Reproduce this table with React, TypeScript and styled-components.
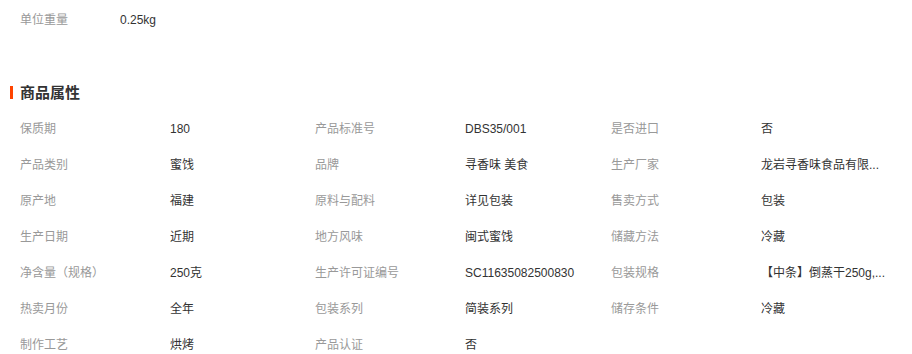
import React from "react";
import styled, { createGlobalStyle } from "styled-components";

const Global = createGlobalStyle`
  html, body { margin: 0; padding: 0; background: #fff; }
  body { font-family: "Liberation Sans", "Noto Sans CJK SC", sans-serif; font-size: 12px; color: #333; }
`;

const Page = styled.div`
  width: 912px;
  padding-left: 20px;
  box-sizing: border-box;
`;

const TopRow = styled.div`
  display: flex;
  height: 40px;
  line-height: 41px;
`;

const TopLabel = styled.span`
  width: 100px;
  color: #999;
`;

const TopValue = styled.span`
  color: #333;
`;

const Title = styled.h3`
  position: relative;
  margin: 43px 0 0 0;
  height: 20px;
  line-height: 20px;
  font-size: 15px;
  font-weight: bold;
  color: #333;
  &::before {
    content: "";
    position: absolute;
    left: -10px;
    top: 3px;
    width: 3px;
    height: 13px;
    background: #ff4400;
  }
`;

const Grid = styled.div`
  margin-top: 8px;
  display: grid;
  grid-template-columns: 150px 145px 150px 146px 150px 130px;
  grid-auto-rows: 36px;
  align-items: center;
`;

const Cell = styled.div<{ $label?: boolean }>`
  color: ${(p) => (p.$label ? "#999" : "#333")};
  line-height: 36px;
  white-space: nowrap;
`;

const rows: [string, string][][] = [
  [["保质期", "180"], ["产品标准号", "DBS35/001"], ["是否进口", "否"]],
  [["产品类别", "蜜饯"], ["品牌", "寻香味 美食"], ["生产厂家", "龙岩寻香味食品有限..."]],
  [["原产地", "福建"], ["原料与配料", "详见包装"], ["售卖方式", "包装"]],
  [["生产日期", "近期"], ["地方风味", "闽式蜜饯"], ["储藏方法", "冷藏"]],
  [["净含量（规格）", "250克"], ["生产许可证编号", "SC11635082500830"], ["包装规格", "【中条】倒蒸干250g,..."]],
  [["热卖月份", "全年"], ["包装系列", "简装系列"], ["储存条件", "冷藏"]],
  [["制作工艺", "烘烤"], ["产品认证", "否"]],
];

export default function App() {
  return (
    <Page>
      <Global />
      <TopRow>
        <TopLabel>单位重量</TopLabel>
        <TopValue>0.25kg</TopValue>
      </TopRow>
      <Title>商品属性</Title>
      <Grid>
        {rows.map((r, i) => (
          <React.Fragment key={i}>
            {r.map(([k, v], j) => (
              <React.Fragment key={j}>
                <Cell $label>{k}</Cell>
                <Cell>{v}</Cell>
              </React.Fragment>
            ))}
            {r.length < 3 &&
              Array.from({ length: (3 - r.length) * 2 }).map((_, j) => <Cell key={"e" + j} />)}
          </React.Fragment>
        ))}
      </Grid>
    </Page>
  );
}
